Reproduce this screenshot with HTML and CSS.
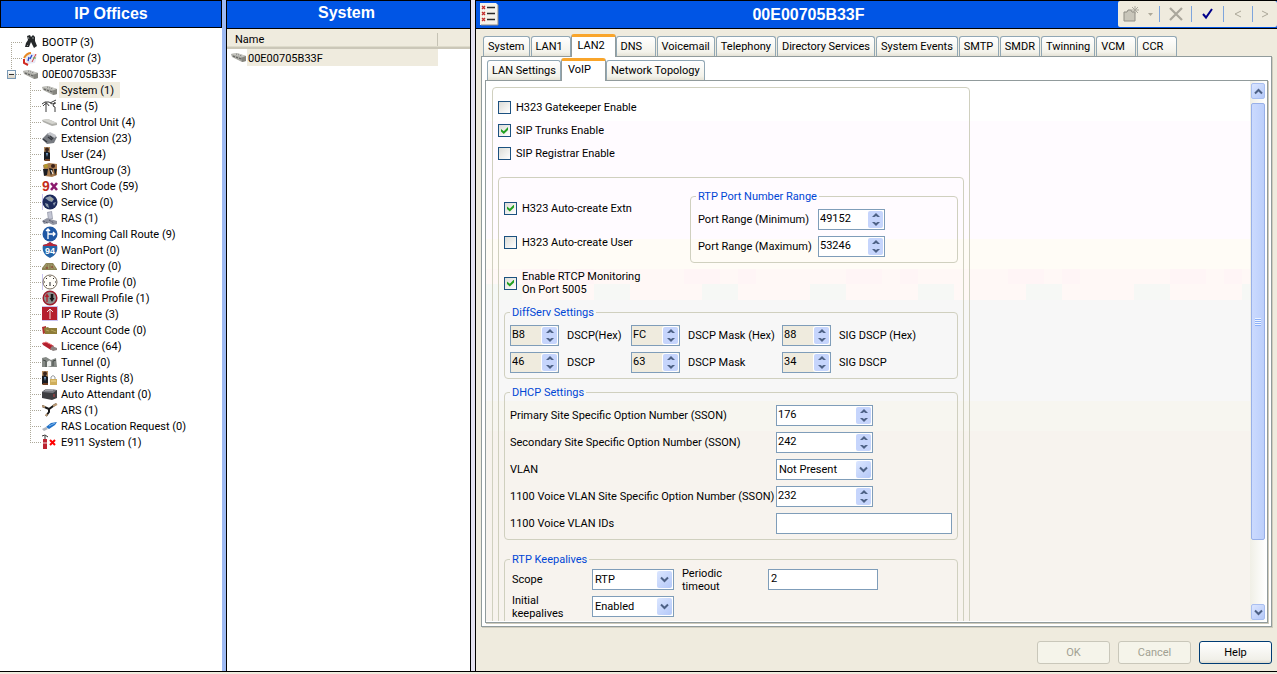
FILE: index.html
```html
<!DOCTYPE html>
<html lang="en">
<head>
<meta charset="utf-8">
<title>IP Office Manager</title>
<link rel="stylesheet" href="styles.css">
</head>
<body>
<svg class="defs" aria-hidden="true">
  <symbol id="unit" viewBox="0 0 16 16"><path d="M0 5l6-1 9 3v5l-4 1-10-5z" fill="#a9a9a3"/><path d="M0 5l6-1 9 3-4 1z" fill="#c9c9c4"/><path d="M10 9l5-2v5l-4 1z" fill="#85857f"/><path d="M2 7l2 1M5 8l2 1M8 9l2 1" stroke="#555"/><path d="M5 5l6 2" stroke="#777" stroke-dasharray="1 1"/></symbol>
  <symbol id="chev-down" viewBox="0 0 9 9"><path d="M1 2.5l3.5 3.5L8 2.500" fill="none" stroke="#4d6185" stroke-width="2"/></symbol>
  <symbol id="chev-up" viewBox="0 0 9 9"><path d="M1 6.500l3.500-3.500L8 6.500" fill="none" stroke="#4d6185" stroke-width="2"/></symbol>
  <symbol id="tri-up" viewBox="0 0 8 5"><path d="M4 0l4 4H5.500L4 3 2.500 4H0z" fill="#4d6185"/></symbol>
  <symbol id="tri-down" viewBox="0 0 8 5"><path d="M4 5l4-4H5.500L4 2 2.500 1H0z" fill="#4d6185"/></symbol>
  <symbol id="person" viewBox="0 0 16 16"><path d="M2 1h6v14H2z" fill="#b08a60"/><circle cx="5" cy="3.500" r="2" fill="#3a241a"/><path d="M2 6l3-1 3 2v7H2z" fill="#191c22"/><path d="M4 7l1 4 1-4z" fill="#7da9d6"/><path d="M3 14h5" stroke="#6d3d22" stroke-width="2"/></symbol>
</svg>
<main class="app">
  <section class="panel tree-panel">
    <h1 class="bar">IP Offices</h1>
    <ul class="tree">
      <li class="first"><div class="node"><svg class="ico" viewBox="0 0 16 16"><path d="M4 2l3-1 1 2 2-2 2 2 0 4 2 5-3 2-2-4-1-2-2 5-4 0 1-4 2-3z" fill="#25282a"/><path d="M5 3l1 2M10 3l0 2M4 11l1 1" stroke="#8b908f"/></svg><span>BOOTP (3)</span></div></li>
      <li><div class="node"><svg class="ico" viewBox="0 0 16 16"><path d="M2 8q5-7 12-3l-2 8-8 1z" fill="#e6e8f5"/><path d="M1 8q3-5 7-5" stroke="#e88a25" stroke-width="2" fill="none"/><path d="M1 9v4l4 2" stroke="#d22a22" stroke-width="2" fill="none"/><path d="M6 7l-1 4M9 5L7 9" stroke="#2848c8" stroke-width="1.300"/><path d="M13 4L9 12" stroke="#d63a38"/><path d="M10 8h3" stroke="#59b257"/></svg><span>Operator (3)</span></div></li>
      <li class="open"><div class="node"><svg class="ico" viewBox="0 0 16 16"><use href="#unit"/></svg><span>00E00705B33F</span></div>
        <ul>
          <li><div class="node"><svg class="ico" viewBox="0 0 16 16"><use href="#unit"/></svg><span class="selected">System (1)</span></div></li>
          <li><div class="node"><svg class="ico" viewBox="0 0 16 16"><path d="M0 6l3-2h4l3 2 4-1M4 4v10M13 4l-2 4 2 1v5M1 8q4-5 6 0M8 5l6-3" fill="none" stroke="#3b3b3b"/></svg><span>Line (5)</span></div></li>
          <li><div class="node"><svg class="ico" viewBox="0 0 16 16"><path d="M0 6l6-1 9 4v2l-5 1-9-4z" fill="#aeaea9"/><path d="M0 6l6-1 9 4-5 1z" fill="#d5d5d0"/></svg><span>Control Unit (4)</span></div></li>
          <li><div class="node"><svg class="ico" viewBox="0 0 16 16"><path d="M0 9l6-6 9 4-3 6-7 1z" fill="#777b81"/><path d="M5 4l3-2 6 3-1 3z" fill="#c4c6cb"/><path d="M1 9l4 3M6 7l4 3M8 6l3 3" stroke="#383b42" stroke-width="1.400"/></svg><span>Extension (23)</span></div></li>
          <li><div class="node"><svg class="ico" viewBox="0 0 16 16"><use href="#person"/></svg><span>User (24)</span></div></li>
          <li><div class="node"><svg class="ico" viewBox="0 0 16 16"><path d="M1 3l6-2 8 1v11l-5 2-7-1z" fill="#a87b4e"/><circle cx="4" cy="4" r="2" fill="#b59a2d"/><circle cx="11" cy="4" r="2" fill="#392018"/><path d="M1 7h5l-1 6-3 1zM7 6l2 8 2-7zM12 7h3l-2 7z" fill="#191b20"/><path d="M9 8l2 4" stroke="#fff"/></svg><span>HuntGroup (3)</span></div></li>
          <li><div class="node"><svg class="ico" viewBox="0 0 16 16"><text x="0" y="13" class="nine">9</text><path d="M9 5l6 7M15 5l-6 7" stroke="#8b1a6d" stroke-width="2.600"/></svg><span>Short Code (59)</span></div></li>
          <li><div class="node"><svg class="ico" viewBox="0 0 16 16"><path d="M0 0v16" stroke="#c9c4f0" stroke-width="2"/><circle cx="8" cy="8" r="7.500" fill="#1c2a5c"/><path d="M3 4l5-2 4 3-2 3-3-1zM3 9l3 1 1 4-3-2zM11 9l3-1-2 4z" fill="#8e9caf"/><path d="M8 3l3 2-2 2" fill="#a8a78e"/></svg><span>Service (0)</span></div></li>
          <li><div class="node"><svg class="ico" viewBox="0 0 16 16"><path d="M5 2l5-1 1 8-5 1z" fill="#a3a6b5"/><path d="M6 3l3-1 1 6-3 1z" fill="#c3c6d4"/><path d="M0 11l5-3 10 3v3l-4 1-4-2-5 1z" fill="#9295a2"/><path d="M1 11l5 2M7 10l5 3" stroke="#55586a" stroke-dasharray="2 1"/></svg><span>RAS (1)</span></div></li>
          <li><div class="node"><svg class="ico" viewBox="0 0 16 16"><circle cx="8" cy="8" r="7.500" fill="#1f57a4"/><path d="M6 13V3M4 5l2-2 2 2M6 8h7M11 6l2 2-2 2" fill="none" stroke="#fff" stroke-width="1.300"/></svg><span>Incoming Call Route (9)</span></div></li>
          <li><div class="node"><svg class="ico" viewBox="0 0 16 16"><path d="M1 3q3 0 7-3 4 3 7 3 2 9-7 13Q-1 12 1 3z" fill="#2464a8"/><path d="M1 3q3 0 7-3 4 3 7 3v1H1z" fill="#b7283a"/><text x="3" y="12" class="route">94</text></svg><span>WanPort (0)</span></div></li>
          <li><div class="node"><svg class="ico" viewBox="0 0 16 16"><path d="M0 10l4-5 7 0 4 6v1H0z" fill="#8d8456"/><path d="M2 10l3-4M6 11l1-5M10 11L9 6M13 11l-2-4" stroke="#a79d6c"/><path d="M4 10h2M9 9h2" stroke="#8d2f27"/></svg><span>Directory (0)</span></div></li>
          <li><div class="node"><svg class="ico" viewBox="0 0 16 16"><path d="M0 0v16" stroke="#c9c4f0" stroke-width="2"/><circle cx="8" cy="8" r="7" fill="#fffdf8" stroke="#796d5e"/><path d="M8 8v4M8 2v1M14 8h-1M3 8H2M4 4l1 1M12 4l-1 1M4 12l1-1M12 12l-1-1" stroke="#292929"/></svg><span>Time Profile (0)</span></div></li>
          <li><div class="node"><svg class="ico" viewBox="0 0 16 16"><circle cx="8" cy="8" r="6.800" fill="#8f9290" stroke="#9d1d2c" stroke-width="1.500"/><path d="M5 12V5M3.500 7L5 4.500 6.500 7" stroke="#b51d29" fill="none" stroke-width="1.300"/><path d="M10 4v5" stroke="#191919" stroke-width="2.600"/><path d="M7.500 8h5l-2.500 4z" fill="#191919"/></svg><span>Firewall Profile (1)</span></div></li>
          <li><div class="node"><svg class="ico" viewBox="0 0 16 16"><path d="M0 0h16v15H0z" fill="#c9c4f0"/><path d="M0 1h15v13H0z" fill="#b51f2f"/><path d="M8 13V3M5 6l3-3 3 3" stroke="#f1e4e2" fill="none"/></svg><span>IP Route (3)</span></div></li>
          <li><div class="node"><svg class="ico" viewBox="0 0 16 16"><path d="M0 5l4-1v7l-3 1z" fill="#b12e2e"/><path d="M2 6l4-1 1 1h8v6H3z" fill="#8e7c38"/><path d="M4 8l3 1M9 8l5 2" stroke="#b5a45b"/></svg><span>Account Code (0)</span></div></li>
          <li><div class="node"><svg class="ico" viewBox="0 0 16 16"><path d="M0 5l4-1 8 4-3 4-8-5z" fill="#b3202d"/><path d="M1 5l3-1 6 3" stroke="#ed7c80" fill="none"/><path d="M10 8l5 2v2l-4 1-3-2z" fill="#8c8280"/></svg><span>Licence (64)</span></div></li>
          <li><div class="node"><svg class="ico" viewBox="0 0 16 16"><path d="M0 4l4-1 5 3 5-2 1 9H0z" fill="#858985"/><path d="M5 13V8q3-3 4 0v4z" fill="#eceeec"/><path d="M1 6l3 1v6M11 7l3-1M11 12V7" stroke="#454a47" fill="none"/></svg><span>Tunnel (0)</span></div></li>
          <li><div class="node"><svg class="ico" viewBox="0 0 16 16"><use href="#person" x="-2"/><path d="M9 10V7q2-3 4 0v3" fill="none" stroke="#969a9b"/><path d="M8 9h7v6H8z" fill="#cfae5c"/><path d="M9 11h5" stroke="#f3dc98"/></svg><span>User Rights (8)</span></div></li>
          <li><div class="node"><svg class="ico" viewBox="0 0 16 16"><path d="M0 6l4-3 11 1v8l-5 2-10-2z" fill="#3e3f42"/><path d="M0 6l4-3 11 1-4 3z" fill="#77797f"/><path d="M3 4h8" stroke="#bcbec2"/><path d="M12 8v3" stroke="#c24242"/></svg><span>Auto Attendant (0)</span></div></li>
          <li><div class="node"><svg class="ico" viewBox="0 0 16 16"><path d="M0 4l7 3 7-5M7 7v3l-3 4" fill="none" stroke="#191919" stroke-width="2"/><path d="M11 4l4-2M0 4l3 1M5 12l-1 2" stroke="#b89873" stroke-width="2"/></svg><span>ARS (1)</span></div></li>
          <li><div class="node"><svg class="ico" viewBox="0 0 16 16"><path d="M4 9l5-4 6-1-2 3-6 4z" fill="#2071c7"/><path d="M7 8l6-3" stroke="#7fb7ee"/><path d="M0 11l4-2 2 2-4 2z" fill="#aeb4bd"/></svg><span>RAS Location Request (0)</span></div></li>
          <li><div class="node"><svg class="ico" viewBox="0 0 16 16"><path d="M1 5h4v10H1z" fill="#bc2330"/><path d="M0 2l3-1 3 2M3 2v3" stroke="#333" fill="none"/><path d="M1 9h4" stroke="#efd7d8"/><path d="M8 6l5 5M13 6l-5 5" stroke="#f00" stroke-width="2"/></svg><span>E911 System (1)</span></div></li>
        </ul>
      </li>
    </ul>
  </section>
  <div class="splitter"></div>
  <section class="panel list-panel">
    <h2 class="bar">System</h2>
    <table class="list">
      <thead><tr><th class="name-col" scope="col"><span>Name</span></th><th></th></tr></thead>
      <tbody><tr><td><div class="item"><svg class="ico" viewBox="0 0 16 16"><use href="#unit"/></svg><span>00E00705B33F</span></div></td><td></td></tr></tbody>
    </table>
  </section>
  <div class="splitter pale"></div>
  <section class="detail">
    <header class="bar detail-bar">
      <svg class="doc" viewBox="0 0 20 24"><path d="M1 1h16l2 2v20H1z" fill="#f5f2ea"/><path d="M19 3v20H2" fill="none" stroke="#8d8b85"/><path d="M3 4l3 3M6 4L3 7M3 10l3 3M6 10l-3 3M3 16l3 3M6 16l-3 3" stroke="#c22c2c" stroke-width="1.300"/><path d="M8 5.500h8M8 11.500h8M8 17.500h8" stroke="#292929" stroke-width="1.400"/></svg>
      <h2 class="detail-title">00E00705B33F</h2>
      <div class="toolbar">
        <button class="tool new" aria-label="New" disabled><svg width="32" height="18" viewBox="0 0 32 18"><path d="M1 7h3l1-2h3l1 2h3v9H1z" fill="#c9c6ba" stroke="#8f8d84"/><path d="M12 1v8M9 2l6 6M15 2L9 8M8 5h8" stroke="#aaa79c"/><path d="M25 8h5l-2.500 3z" fill="#aca899"/></svg></button>
        <button class="tool del" aria-label="Delete" disabled><svg width="14" height="14" viewBox="0 0 14 14"><path d="M1 1l12 12M13 1L1 13" stroke="#aaa79c" stroke-width="2.200"/></svg></button>
        <button class="tool ok" aria-label="Validate"><svg width="12" height="12" viewBox="0 0 12 12"><path d="M1 6l3 3.500L10 1" fill="none" stroke="#00008b" stroke-width="2"/></svg></button>
        <button class="tool prev" aria-label="Previous" disabled><svg width="8" height="8" viewBox="0 0 8 8"><path d="M7 1L1 4l6 3" fill="none" stroke="#aca899"/></svg></button>
        <button class="tool next" aria-label="Next" disabled><svg width="8" height="8" viewBox="0 0 8 8"><path d="M1 1l6 3-6 3" fill="none" stroke="#aca899"/></svg></button>
      </div>
    </header>
    <div class="workspace">
      <div class="tabs" role="tablist">
        <button class="tab" role="tab">System</button><button class="tab" role="tab">LAN1</button><button class="tab active" role="tab" aria-selected="true">LAN2</button><button class="tab" role="tab">DNS</button><button class="tab" role="tab">Voicemail</button><button class="tab" role="tab">Telephony</button><button class="tab" role="tab">Directory Services</button><button class="tab" role="tab">System Events</button><button class="tab" role="tab">SMTP</button><button class="tab" role="tab">SMDR</button><button class="tab" role="tab">Twinning</button><button class="tab" role="tab">VCM</button><button class="tab" role="tab">CCR</button>
      </div>
      <div class="page">
        <div class="tabs" role="tablist">
          <button class="tab" role="tab">LAN Settings</button><button class="tab active" role="tab" aria-selected="true">VoIP</button><button class="tab" role="tab">Network Topology</button>
        </div>
        <div class="pane">
          <form class="view">
            <div class="group outer">
              <label class="check"><input type="checkbox">H323 Gatekeeper Enable</label>
              <label class="check"><input type="checkbox" checked>SIP Trunks Enable</label>
              <label class="check"><input type="checkbox">SIP Registrar Enable</label>
              <div class="group inner">
                <div class="top">
                  <div class="options">
                    <label class="check tall"><input type="checkbox" checked>H323 Auto-create Extn</label>
                    <label class="check tall"><input type="checkbox">H323 Auto-create User</label>
                    <label class="check rtcp"><input type="checkbox" checked><span>Enable RTCP Monitoring<br>On Port 5005</span></label>
                  </div>
                  <fieldset class="ports">
                    <legend>RTP Port Number Range</legend>
                    <div class="grid">
                      <label for="pmin">Port Range (Minimum)</label><span class="spin mid"><input id="pmin" type="text" value="49152"><span class="arrows"><button type="button" aria-label="Up"><svg viewBox="0 0 8 5"><use href="#tri-up"/></svg></button><button type="button" aria-label="Down"><svg viewBox="0 0 8 5"><use href="#tri-down"/></svg></button></span></span>
                      <label for="pmax">Port Range (Maximum)</label><span class="spin mid"><input id="pmax" type="text" value="53246"><span class="arrows"><button type="button" aria-label="Up"><svg viewBox="0 0 8 5"><use href="#tri-up"/></svg></button><button type="button" aria-label="Down"><svg viewBox="0 0 8 5"><use href="#tri-down"/></svg></button></span></span>
                    </div>
                  </fieldset>
                </div>
                <fieldset class="diffserv">
                  <legend>DiffServ Settings</legend>
                  <div class="grid">
                    <div class="pair"><span class="spin off"><input id="d1" type="text" value="B8" readonly><span class="arrows"><button type="button" aria-label="Up"><svg viewBox="0 0 8 5"><use href="#tri-up"/></svg></button><button type="button" aria-label="Down"><svg viewBox="0 0 8 5"><use href="#tri-down"/></svg></button></span></span><label for="d1">DSCP(Hex)</label></div>
                    <div class="pair"><span class="spin off"><input id="d2" type="text" value="FC" readonly><span class="arrows"><button type="button" aria-label="Up"><svg viewBox="0 0 8 5"><use href="#tri-up"/></svg></button><button type="button" aria-label="Down"><svg viewBox="0 0 8 5"><use href="#tri-down"/></svg></button></span></span><label for="d2">DSCP Mask (Hex)</label></div>
                    <div class="pair"><span class="spin off"><input id="d3" type="text" value="88" readonly><span class="arrows"><button type="button" aria-label="Up"><svg viewBox="0 0 8 5"><use href="#tri-up"/></svg></button><button type="button" aria-label="Down"><svg viewBox="0 0 8 5"><use href="#tri-down"/></svg></button></span></span><label for="d3">SIG DSCP (Hex)</label></div>
                    <div class="pair"><span class="spin off"><input id="d4" type="text" value="46" readonly><span class="arrows"><button type="button" aria-label="Up"><svg viewBox="0 0 8 5"><use href="#tri-up"/></svg></button><button type="button" aria-label="Down"><svg viewBox="0 0 8 5"><use href="#tri-down"/></svg></button></span></span><label for="d4">DSCP</label></div>
                    <div class="pair"><span class="spin off"><input id="d5" type="text" value="63" readonly><span class="arrows"><button type="button" aria-label="Up"><svg viewBox="0 0 8 5"><use href="#tri-up"/></svg></button><button type="button" aria-label="Down"><svg viewBox="0 0 8 5"><use href="#tri-down"/></svg></button></span></span><label for="d5">DSCP Mask</label></div>
                    <div class="pair"><span class="spin off"><input id="d6" type="text" value="34" readonly><span class="arrows"><button type="button" aria-label="Up"><svg viewBox="0 0 8 5"><use href="#tri-up"/></svg></button><button type="button" aria-label="Down"><svg viewBox="0 0 8 5"><use href="#tri-down"/></svg></button></span></span><label for="d6">SIG DSCP</label></div>
                  </div>
                </fieldset>
                <fieldset class="dhcp">
                  <legend>DHCP Settings</legend>
                  <div class="grid">
                    <label for="s1">Primary Site Specific Option Number (SSON)</label><span class="spin wide"><input id="s1" type="text" value="176"><span class="arrows"><button type="button" aria-label="Up"><svg viewBox="0 0 8 5"><use href="#tri-up"/></svg></button><button type="button" aria-label="Down"><svg viewBox="0 0 8 5"><use href="#tri-down"/></svg></button></span></span>
                    <label for="s2">Secondary Site Specific Option Number (SSON)</label><span class="spin wide"><input id="s2" type="text" value="242"><span class="arrows"><button type="button" aria-label="Up"><svg viewBox="0 0 8 5"><use href="#tri-up"/></svg></button><button type="button" aria-label="Down"><svg viewBox="0 0 8 5"><use href="#tri-down"/></svg></button></span></span>
                    <label for="vlan">VLAN</label><span class="combo wide"><select id="vlan"><option>Not Present</option></select><span class="drop"><svg viewBox="0 0 9 9"><use href="#chev-down"/></svg></span></span>
                    <label for="s3">1100 Voice VLAN Site Specific Option Number (SSON)</label><span class="spin wide"><input id="s3" type="text" value="232"><span class="arrows"><button type="button" aria-label="Up"><svg viewBox="0 0 8 5"><use href="#tri-up"/></svg></button><button type="button" aria-label="Down"><svg viewBox="0 0 8 5"><use href="#tri-down"/></svg></button></span></span>
                    <label for="ids">1100 Voice VLAN IDs</label><input class="text" id="ids" type="text">
                  </div>
                </fieldset>
                <fieldset class="keep">
                  <legend>RTP Keepalives</legend>
                  <div class="grid">
                    <label class="indent" for="scope">Scope</label><span class="combo"><select id="scope"><option>RTP</option></select><span class="drop"><svg viewBox="0 0 9 9"><use href="#chev-down"/></svg></span></span>
                    <label for="per">Periodic<br>timeout</label><input class="text" id="per" type="text" value="2">
                    <label class="indent" for="init">Initial<br>keepalives</label><span class="combo"><select id="init"><option>Enabled</option></select><span class="drop"><svg viewBox="0 0 9 9"><use href="#chev-down"/></svg></span></span>
                  </div>
                </fieldset>
              </div>
            </div>
          </form>
          <div class="scrollbar">
            <button class="sb" aria-label="Scroll up"><svg viewBox="0 0 9 9"><use href="#chev-up"/></svg></button>
            <div class="track"><div class="thumb"><i></i></div></div>
            <button class="sb" aria-label="Scroll down"><svg viewBox="0 0 9 9"><use href="#chev-down"/></svg></button>
          </div>
        </div>
      </div>
      <footer class="actions">
        <button class="btn" disabled>OK</button>
        <button class="btn" disabled>Cancel</button>
        <button class="btn default">Help</button>
      </footer>
    </div>
  </section>
</main>
</body>
</html>
```
FILE: styles.css
```css
* { box-sizing: border-box; }
body {
  margin: 0;
  background: #efebde;
  color: #000;
  font: 11px/13px Tahoma, Roboto, "DejaVu Sans Condensed", sans-serif;
}
button, input, select { font: inherit; color: inherit; margin: 0; padding: 0; border: 0; background: none; }
svg { display: block; }
.defs { display: none; }

.app {
  display: grid;
  grid-template-columns: 222px 4px 245px 4px minmax(0, 1fr);
  height: calc(100vh - 2px);
  border-bottom: 1px solid #000;
  box-shadow: 0 1px 0 #aaa79c;
}
.splitter { background: #9ebaf3; }
.splitter.pale { background: #e4e2f0; }
.panel { background: #fff; min-width: 0; }
.list-panel { border: solid #000; border-width: 0 1px; }

.bar {
  margin: 0;
  height: 28px;
  background: #0055e5;
  border: 1px solid #000;
  color: #fff;
  font: bold 16px/26px "Liberation Sans", Arial, sans-serif;
  text-align: center;
}
.list-panel .bar { height: 29px; border-width: 1px 0; line-height: 24px; padding-right: 4px; }

/* Tree */
.tree, .tree ul { list-style: none; margin: 0; padding: 0; }
.tree { padding: 6px 0 0 11px; }
.tree li {
  padding-left: 12px;
  background:
    repeating-linear-gradient(to bottom, #aca899 0 1px, transparent 1px 2px) 0 0 / 1px 100% no-repeat,
    repeating-linear-gradient(to right, #aca899 0 1px, transparent 1px 2px) 0 8px / 11px 1px no-repeat;
}
.tree li.first { background-position: 0 8px, 0 8px; }
.tree li li:last-child { background-size: 1px 8px, 11px 1px; }
.tree li.open {
  margin-left: -4px;
  padding-left: 16px;
  background:
    linear-gradient(#333, #333) 2px 8px / 5px 1px no-repeat,
    linear-gradient(#fff, #d8d2c4) 1px 5px / 7px 7px no-repeat,
    linear-gradient(#7898b5, #7898b5) 0 4px / 9px 9px no-repeat,
    repeating-linear-gradient(to bottom, #aca899 0 1px, transparent 1px 2px) 4px 0 / 1px 4px no-repeat,
    repeating-linear-gradient(to right, #aca899 0 1px, transparent 1px 2px) 9px 8px / 6px 1px no-repeat;
}
.tree ul { padding-left: 7px; }
.node { display: flex; align-items: center; gap: 1px; height: 16px; }
.node span { padding: 1px 2px 0; line-height: 15px; white-space: nowrap; }
.node .selected { background: #efebde; padding-right: 6px; }
.ico { width: 16px; height: 16px; flex: none; }
.nine { font: bold 14px "Liberation Sans", sans-serif; fill: #c42d1c; }
.route { font: bold 9px "Liberation Sans", sans-serif; fill: #fff; }

/* List */
.list { width: 100%; border-collapse: collapse; table-layout: fixed; }
.list th {
  height: 20px;
  padding: 0;
  background: linear-gradient(#efebde 0 17px, #dedbcb 17px 18px, #cbc7b8 18px 20px);
  font-weight: normal;
  text-align: left;
}
.name-col { width: 211px; }
.name-col span { display: block; height: 13px; padding-left: 8px; border-right: 1px solid #c6c3b5; }
.list td { padding: 0; }
.item { display: flex; height: 17px; padding-left: 4px; }
.item span { flex: 1; padding: 3px 1px 1px; background: #efebde; }

/* Detail */
.detail { display: flex; flex-direction: column; min-width: 0; min-height: 0; border-left: 1px solid #000; }
.detail-bar { display: flex; flex: none; height: 29px; border-width: 1px 0; }
.doc { width: 20px; height: 24px; margin: 1px 0 0 3px; }
.detail-title { flex: 1; margin: 0; font: inherit; line-height: 27px; }
.toolbar { display: flex; align-items: center; background: #efebde; border-radius: 2px; height: 26px; }
.tool { display: flex; align-items: center; justify-content: center; height: 16px; border-left: 1px solid #7ea5dc; }
.tool.new { border: 0; width: 41px; }
.tool.del { width: 32px; }
.tool.ok { width: 32px; }
.tool.prev { width: 29px; }
.tool.next { width: 25px; }

.workspace { display: flex; flex: 1; flex-direction: column; min-height: 0; padding: 4px 5px 7px; }
.tabs { display: flex; align-items: flex-end; gap: 1px; height: 23px; flex: none; padding-left: 2px; }
.tab {
  height: 20px;
  min-width: 40px;
  padding: 0 4px;
  border: 1px solid #91a7b4;
  border-bottom: 0;
  border-radius: 3px 3px 0 0;
  background: linear-gradient(#fff, #f3f2ea 80%, #e5e2d6);
  text-align: left;
  white-space: nowrap;
}
.tab.active {
  height: 23px;
  min-width: 45px;
  margin: 0 -1px -1px;
  padding: 0 6px 3px;
  border-color: #919b9c;
  border-top: 3px solid #f9a52b;
  background: #fff;
  z-index: 1;
}
.page {
  display: flex;
  flex: 1;
  flex-direction: column;
  min-height: 0;
  padding: 0 3px 3px;
  border: 1px solid #919b9c;
  background: #fff;
  box-shadow: 1px 1px 0 #d0ccbd;
}
.pane {
  display: flex;
  flex: 1;
  min-height: 0;
  padding: 0 1px 1px 0;
  border: 1px solid #919b9c;
  box-shadow: 1px 1px 0 #d0ccbd;
}
.view {
  flex: 1;
  min-width: 0;
  overflow: hidden;
  padding: 6px 0 0 6px;
  background:
    repeating-linear-gradient(90deg, #fff5f6 0 36px, transparent 36px 54px, #fff5f6 54px 72px, transparent 72px 162px) 36px 188px / 100% 15px no-repeat,
    repeating-linear-gradient(90deg, #f6f8f5 0 36px, transparent 36px 108px) 0 203px / 100% 16px no-repeat,
    linear-gradient(#fff 0 40px, #fffbff 40px 158px, #fffcf6 158px 188px, #fff8f6 188px 219px, #f7f7f7 219px 320px, #f7f6f0 320px 350px, #f7f3ee 350px);
}

/* Form */
.group { border: 1px solid #d0d0bf; border-radius: 4px; }
.outer { width: 478px; padding: 8px 5px 0; }
.inner { margin-top: 12px; padding: 12px 5px 20px; }
.check { display: flex; align-items: center; gap: 5px; height: 23px; }
.options { padding-top: 1px; }
.check.tall { height: 34px; }
.check.rtcp { height: 26px; margin-top: 11px; }
.check input {
  appearance: none;
  width: 13px;
  height: 13px;
  border: 1px solid #1c5180;
  background: linear-gradient(135deg, #dcdcd7, #fff);
}
.check input:checked::before {
  content: "";
  display: block;
  width: 7px;
  height: 7px;
  margin: 2px;
  background: #21a121;
  clip-path: polygon(0 28%, 40% 62%, 100% 0, 100% 42%, 40% 100%, 0 66%);
}
.top { display: grid; grid-template-columns: 186px 1fr; align-items: start; }
fieldset { min-width: 0; margin: 0; padding: 6px 5px 5px; border: 1px solid #d0d0bf; border-radius: 4px; }
legend { padding: 0 2px; color: #0046d5; }
.grid { display: grid; grid-auto-rows: 21px; row-gap: 6px; align-items: center; }
.indent { padding-left: 2px; }
.ports .grid { grid-template-columns: 120px 1fr; padding-left: 2px; }
.diffserv { margin-top: 10px; }
.diffserv .grid { grid-template-columns: 121px 151px 1fr; }
.pair { display: flex; align-items: center; gap: 8px; }
.dhcp { margin-top: 7px; }
.dhcp .grid { grid-template-columns: 266px 1fr; }
.dhcp label { white-space: nowrap; }
.keep { margin-top: 13px; padding-top: 0; }
.keep .grid { grid-template-columns: 82px 90px 86px 110px; grid-auto-rows: 27px; row-gap: 0; }

.spin, .combo, .text { height: 21px; border: 1px solid #7f9db9; background: #fff; }
.spin { display: flex; width: 49px; padding: 1px; }
.spin.off { background: #efebde; }
.spin.mid { width: 67px; }
.spin.wide, .combo.wide { width: 97px; }
.spin input { flex: 1; min-width: 0; height: 15px; }
.arrows { display: flex; flex-direction: column; width: 15px; background: #c6d5fc; border-radius: 2px; box-shadow: 0 0 0 1px #fff; }
.arrows button { display: flex; flex: 1; align-items: center; justify-content: center; }
.arrows svg { width: 8px; height: 5px; }
.text { width: 100%; padding: 0 2px 2px; }
.combo { display: grid; width: 82px; padding: 1px; }
.combo select { grid-area: 1 / 1; appearance: none; width: 100%; padding-left: 1px; }
.drop {
  grid-area: 1 / 1;
  justify-self: end;
  display: grid;
  place-items: center;
  width: 15px;
  border-radius: 2px;
  background: linear-gradient(135deg, #dbe6ff, #b4c8f8);
  pointer-events: none;
}
.drop svg, .sb svg { width: 9px; height: 9px; }

.scrollbar { display: flex; flex-direction: column; gap: 4px; width: 16px; padding: 2px 1px 1px; background: linear-gradient(90deg, #f0efe6, #fff); }
.sb { display: grid; place-items: center; height: 16px; border: 1px solid #a9bff0; border-radius: 2px; background: linear-gradient(135deg, #dbe6ff, #b4c8f8); }
.track { flex: 1; }
.thumb {
  display: grid;
  place-items: center;
  height: 88%;
  border: 1px solid #98b0e8;
  border-radius: 2px;
  background: linear-gradient(90deg, #cbdafe, #bccffb);
}
.thumb i { width: 6px; height: 8px; background: repeating-linear-gradient(#eef4fe 0 1px, #8cb0f8 1px 2px); }

.actions { display: flex; justify-content: flex-end; gap: 8px; padding-top: 14px; flex: none; }
.btn { width: 73px; height: 23px; border: 1px solid #c9c7ba; border-radius: 3px; background: #f5f4ea; color: #a1a192; }
.btn.default { border-color: #003c74; background: linear-gradient(#fff, #f0efe8 85%, #dedacd); color: #000; }
```
